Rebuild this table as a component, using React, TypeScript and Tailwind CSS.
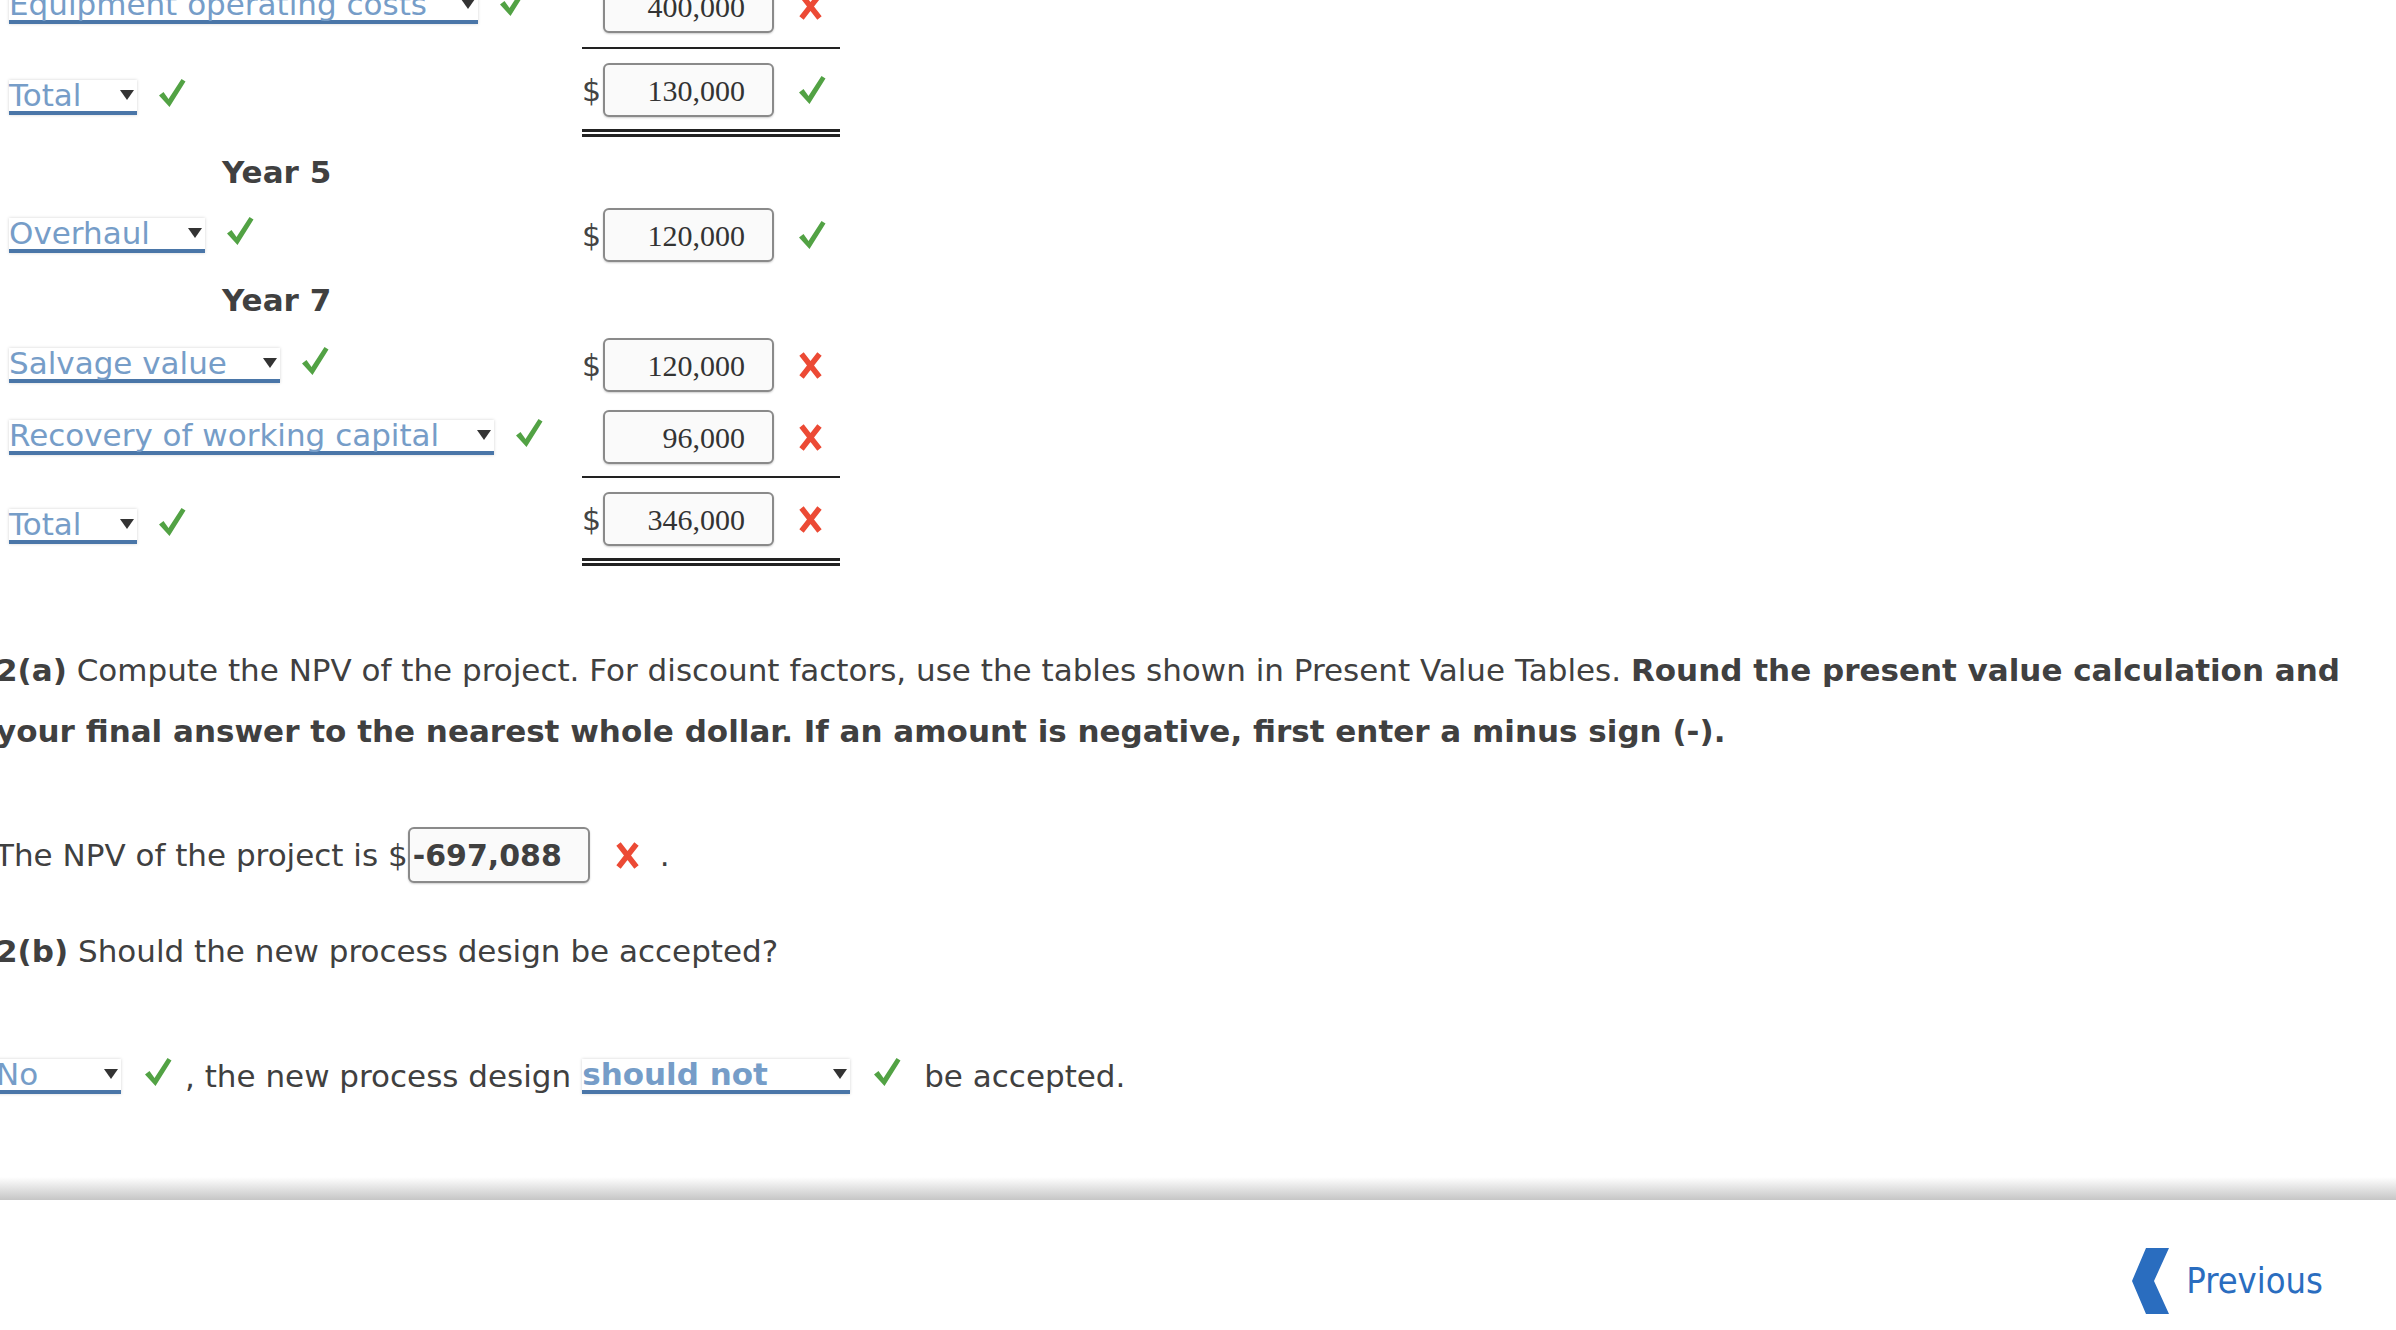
import React from 'react';

const Check = () => (
  <svg width="28" height="30" viewBox="0 0 28 30" className="shrink-0">
    <path d="M1 17.5 L5.5 14 L10.5 21 L23.5 1 L27.5 3.5 L11.5 29 Z" fill="#52a244" />
  </svg>
);

const Cross = () => (
  <svg width="25" height="27" viewBox="0 0 25 27" className="shrink-0">
    <path d="M3.5 2 L21.5 25 M21.5 2 L3.5 25" stroke="#ec4a35" strokeWidth="5.5" strokeLinecap="butt" />
  </svg>
);

const Caret = () => (
  <svg width="14" height="10" viewBox="0 0 14 10" className="shrink-0">
    <path d="M0 0 H14 L7 10 Z" fill="#333" />
  </svg>
);

type DropProps = { label: string; width: string; bold?: boolean; extra?: string };

const Drop = ({ label, width, bold, extra = '' }: DropProps) => (
  <div
    className={`${width} ${extra} flex h-[35px] shrink-0 items-center justify-between border-b-4 border-[#4a76a8] bg-white pr-[3px] shadow-[0_0_3px_rgba(0,0,0,0.18)]`}
  >
    <span className={`leading-[31px] text-[#769dc8] ${bold ? 'font-bold' : ''}`}>{label}</span>
    <Caret />
  </div>
);

type RowProps = { label: string; width: string; value: string; dollar?: boolean; ok: boolean; total?: boolean };

const Row = ({ label, width, value, dollar, ok, total }: RowProps) => (
  <div className="flex h-[54px] items-center">
    <div className={`flex w-[582px] shrink-0 items-center pl-[9px] ${total ? 'translate-y-[7px]' : ''}`}>
      <Drop label={label} width={width} />
      <div className="mb-[8px] ml-[21px]">
        <Check />
      </div>
    </div>
    <div className="flex w-[258px] items-center">
      <span className="w-[21px] text-[30px] text-[#444]">{dollar ? '$' : ''}</span>
      <div className="flex h-[54px] w-[171px] items-center justify-end rounded-[6px] border-2 border-[#8a8a8a] bg-[#fafafa] pr-[27px] font-['Liberation_Serif',serif] text-[30px] text-[#333] shadow-[0_1px_2px_rgba(0,0,0,0.2)]">
        {value}
      </div>
      <div className="ml-[24px]">{ok ? <Check /> : <Cross />}</div>
    </div>
  </div>
);

const Rule = () => <div className="ml-[582px] h-[2px] w-[258px] bg-[#222]" />;
const DoubleRule = () => <div className="ml-[582px] h-[8px] w-[258px] border-y-[3px] border-[#222]" />;

export default function App() {
  return (
    <div className="relative h-[1330px] w-[2396px] overflow-hidden bg-white font-['DejaVu_Sans',Verdana,sans-serif] text-[31px] text-[#404040]">
      <div className="-mt-[21px]">
        <Row label="Equipment operating costs" width="w-[469px]" value="400,000" ok={false} />
        <div className="mt-[14px]">
          <Rule />
        </div>
        <div className="mt-[14px]">
          <Row label="Total" width="w-[128px]" value="130,000" dollar ok total />
        </div>
        <div className="mt-[12px]">
          <DoubleRule />
        </div>
        <div className="ml-[222px] mt-[17px] font-bold leading-[36px]">Year 5</div>
        <div className="mt-[18px]">
          <Row label="Overhaul" width="w-[196px]" value="120,000" dollar ok />
        </div>
        <div className="ml-[222px] mt-[20px] font-bold leading-[36px]">Year 7</div>
        <div className="mt-[20px]">
          <Row label="Salvage value" width="w-[271px]" value="120,000" dollar ok={false} />
        </div>
        <div className="mt-[18px]">
          <Row label="Recovery of working capital" width="w-[485px]" value="96,000" ok={false} />
        </div>
        <div className="mt-[12px]">
          <Rule />
        </div>
        <div className="mt-[14px]">
          <Row label="Total" width="w-[128px]" value="346,000" dollar ok={false} total />
        </div>
        <div className="mt-[12px]">
          <DoubleRule />
        </div>

        <p className="-ml-[4px] mt-[74px] leading-[61px]">
          <b>2(a)</b> Compute the NPV of the project. For discount factors, use the tables shown in Present Value Tables.{' '}
          <b>Round the present value calculation and</b>
          <br />
          <b>your final answer to the nearest whole dollar. If an amount is negative, first enter a minus sign (-).</b>
        </p>

        <div className="-ml-[5px] mt-[65px] flex h-[56px] items-center">
          <span className="leading-[36px]">The NPV of the project is $</span>
          <div className="flex h-[56px] w-[182px] items-center rounded-[6px] border-2 border-[#8a8a8a] bg-[#fafafa] pl-[3px] text-[30px] font-bold text-[#404040] shadow-[0_1px_2px_rgba(0,0,0,0.2)]">
            -697,088
          </div>
          <div className="ml-[25px]">
            <Cross />
          </div>
          <span className="ml-[20px]">.</span>
        </div>

        <div className="-ml-[4px] mt-[50px] leading-[36px]">
          <b>2(b)</b> Should the new process design be accepted?
        </div>

        <div className="-ml-[4px] mt-[88px] flex items-center leading-[36px]">
          <Drop label="No" width="w-[125px]" />
          <div className="mb-[8px] ml-[23px]">
            <Check />
          </div>
          <span className="ml-[13px]">, the new process design</span>
          <Drop label="should not" width="w-[268px]" bold extra="ml-[11px]" />
          <div className="mb-[8px] ml-[23px]">
            <Check />
          </div>
          <span className="ml-[23px]">be accepted.</span>
        </div>
      </div>

      <div className="mt-[82px] h-[23px] bg-gradient-to-b from-white to-[#c6c6c6]" />

      <div className="flex justify-end pr-[73px] pt-[48px]">
        <button className="flex items-center gap-[17px] text-[#2a6dbf]">
          <svg width="37" height="66" viewBox="0 0 37 66">
            <path d="M14 0 H37 L22 33 L37 66 H14 L0 33 Z" fill="#2a6dbf" />
          </svg>
          <span className="font-['DejaVu_Sans_Condensed','DejaVu_Sans',sans-serif] text-[36px] leading-[44px]">Previous</span>
        </button>
      </div>
    </div>
  );
}
